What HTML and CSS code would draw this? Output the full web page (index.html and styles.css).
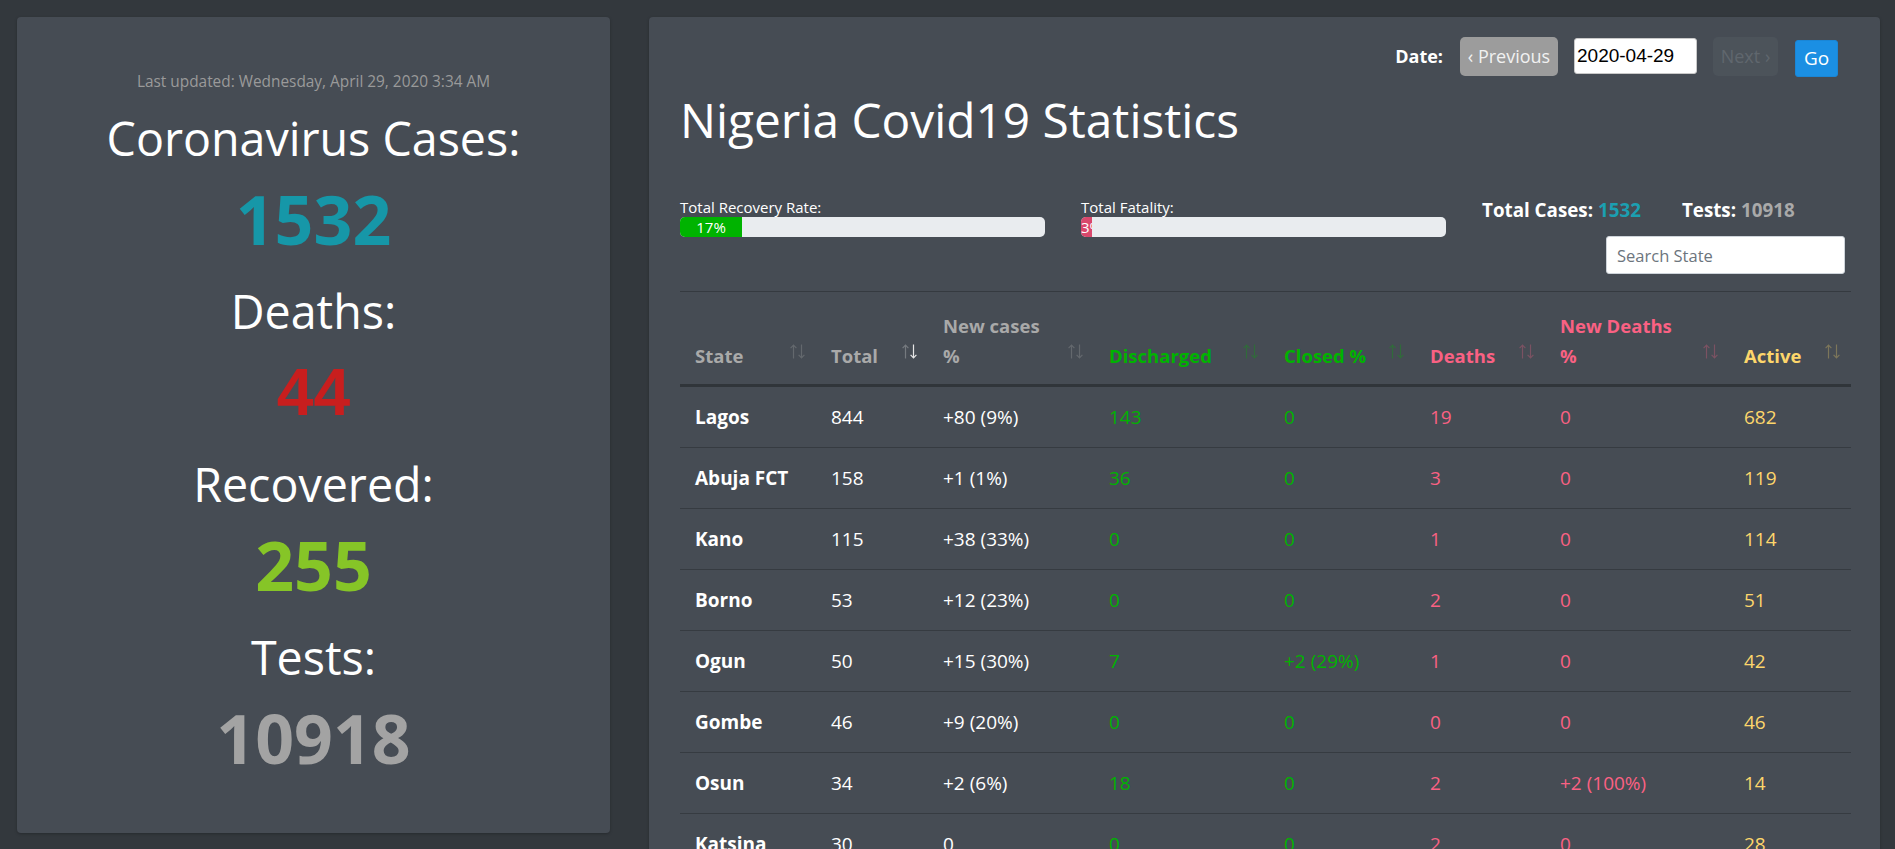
FILE: index.html
```html
<!DOCTYPE html>
<html lang="en">
<head>
<meta charset="utf-8">
<title>Nigeria Covid19 Statistics</title>
<link rel="stylesheet" href="styles.css">
</head>
<body>
<div class="page">
  <aside class="card summary">
    <p class="updated">Last updated: Wednesday, April 29, 2020 3:34 AM</p>
    <h2 class="stat-label first">Coronavirus Cases:</h2>
    <div class="stat-num num-cases">1532</div>
    <h2 class="stat-label">Deaths:</h2>
    <div class="stat-num num-deaths">44</div>
    <h2 class="stat-label">Recovered:</h2>
    <div class="stat-num num-recovered">255</div>
    <h2 class="stat-label">Tests:</h2>
    <div class="stat-num num-tests">10918</div>
  </aside>

  <main class="card main">
    <div class="controls">
      <span class="date-label">Date:</span>
      <button class="btn btn-prev">&lsaquo; Previous</button>
      <input class="date-input" type="text" value="2020-04-29">
      <button class="btn btn-next" disabled>Next &rsaquo;</button>
      <button class="btn btn-go">Go</button>
    </div>

    <h1 class="title">Nigeria Covid19 Statistics</h1>

    <div class="overview">
      <div class="ov-col">
        <div class="ov-label">Total Recovery Rate:</div>
        <div class="progress"><div class="bar bar-green" style="width:17%">17%</div></div>
      </div>
      <div class="ov-col">
        <div class="ov-label">Total Fatality:</div>
        <div class="progress"><div class="bar bar-red" style="width:3%">3%</div></div>
      </div>
      <div class="ov-col ov-totals">
        <div class="totals">
          <span class="total-item">Total Cases: <span class="c-teal">1532</span></span>
          <span class="total-item">Tests: <span class="c-gray">10918</span></span>
        </div>
        <input class="search" type="text" placeholder="Search State">
      </div>
    </div>

    <table class="stats">
      <colgroup>
        <col class="w-state"><col class="w-total"><col class="w-new"><col class="w-dis">
        <col class="w-closed"><col class="w-deaths"><col class="w-newd"><col class="w-active">
      </colgroup>
      <thead>
        <tr>
          <th class="h-gray">State<span class="sort"><svg viewBox="0 0 17 15" width="17" height="15"><path class="up" d="M4.5 14.5V1.2M1.6 4.2l2.9-3 2.9 3"/><path class="down" d="M12.5 0.5v13.3M9.6 10.8l2.9 3 2.9-3"/></svg></span></th>
          <th class="h-gray">Total<span class="sort sorted-desc"><svg viewBox="0 0 17 15" width="17" height="15"><path class="up" d="M4.5 14.5V1.2M1.6 4.2l2.9-3 2.9 3"/><path class="down" d="M12.5 0.5v13.3M9.6 10.8l2.9 3 2.9-3"/></svg></span></th>
          <th class="h-gray">New cases<br>%<span class="sort"><svg viewBox="0 0 17 15" width="17" height="15"><path class="up" d="M4.5 14.5V1.2M1.6 4.2l2.9-3 2.9 3"/><path class="down" d="M12.5 0.5v13.3M9.6 10.8l2.9 3 2.9-3"/></svg></span></th>
          <th class="h-green">Discharged<span class="sort"><svg viewBox="0 0 17 15" width="17" height="15"><path class="up" d="M4.5 14.5V1.2M1.6 4.2l2.9-3 2.9 3"/><path class="down" d="M12.5 0.5v13.3M9.6 10.8l2.9 3 2.9-3"/></svg></span></th>
          <th class="h-green">Closed %<span class="sort"><svg viewBox="0 0 17 15" width="17" height="15"><path class="up" d="M4.5 14.5V1.2M1.6 4.2l2.9-3 2.9 3"/><path class="down" d="M12.5 0.5v13.3M9.6 10.8l2.9 3 2.9-3"/></svg></span></th>
          <th class="h-pink">Deaths<span class="sort"><svg viewBox="0 0 17 15" width="17" height="15"><path class="up" d="M4.5 14.5V1.2M1.6 4.2l2.9-3 2.9 3"/><path class="down" d="M12.5 0.5v13.3M9.6 10.8l2.9 3 2.9-3"/></svg></span></th>
          <th class="h-pink">New Deaths<br>%<span class="sort"><svg viewBox="0 0 17 15" width="17" height="15"><path class="up" d="M4.5 14.5V1.2M1.6 4.2l2.9-3 2.9 3"/><path class="down" d="M12.5 0.5v13.3M9.6 10.8l2.9 3 2.9-3"/></svg></span></th>
          <th class="h-yellow">Active<span class="sort"><svg viewBox="0 0 17 15" width="17" height="15"><path class="up" d="M4.5 14.5V1.2M1.6 4.2l2.9-3 2.9 3"/><path class="down" d="M12.5 0.5v13.3M9.6 10.8l2.9 3 2.9-3"/></svg></span></th>
        </tr>
      </thead>
      <tbody>
        <tr><td class="state">Lagos</td><td>844</td><td>+80 (9%)</td><td class="c-green">143</td><td class="c-green">0</td><td class="c-pink">19</td><td class="c-pink">0</td><td class="c-yellow">682</td></tr>
        <tr><td class="state">Abuja FCT</td><td>158</td><td>+1 (1%)</td><td class="c-green">36</td><td class="c-green">0</td><td class="c-pink">3</td><td class="c-pink">0</td><td class="c-yellow">119</td></tr>
        <tr><td class="state">Kano</td><td>115</td><td>+38 (33%)</td><td class="c-green">0</td><td class="c-green">0</td><td class="c-pink">1</td><td class="c-pink">0</td><td class="c-yellow">114</td></tr>
        <tr><td class="state">Borno</td><td>53</td><td>+12 (23%)</td><td class="c-green">0</td><td class="c-green">0</td><td class="c-pink">2</td><td class="c-pink">0</td><td class="c-yellow">51</td></tr>
        <tr><td class="state">Ogun</td><td>50</td><td>+15 (30%)</td><td class="c-green">7</td><td class="c-green">+2 (29%)</td><td class="c-pink">1</td><td class="c-pink">0</td><td class="c-yellow">42</td></tr>
        <tr><td class="state">Gombe</td><td>46</td><td>+9 (20%)</td><td class="c-green">0</td><td class="c-green">0</td><td class="c-pink">0</td><td class="c-pink">0</td><td class="c-yellow">46</td></tr>
        <tr><td class="state">Osun</td><td>34</td><td>+2 (6%)</td><td class="c-green">18</td><td class="c-green">0</td><td class="c-pink">2</td><td class="c-pink">+2 (100%)</td><td class="c-yellow">14</td></tr>
        <tr><td class="state">Katsina</td><td>30</td><td>0</td><td class="c-green">0</td><td class="c-green">0</td><td class="c-pink">2</td><td class="c-pink">0</td><td class="c-yellow">28</td></tr>
      </tbody>
    </table>
  </main>
</div>
</body>
</html>
```

FILE: styles.css
```css
html, body {
  margin: 0;
  padding: 0;
  overflow: hidden;
}

body {
  background: #33383d;
  color: #ffffff;
  font-family: "Segoe UI", "Open Sans", "Noto Sans", sans-serif;
  font-size: 19px;
}

.page {
  display: grid;
  grid-template-columns: 593px 1231px;
  column-gap: 39px;
  align-items: start;
  padding: 17px 15px 0 17px;
}

.card {
  background: #464c54;
  border-radius: 4px;
  box-shadow: 0 1px 3px rgba(0, 0, 0, 0.25);
}

/* ---------- left summary ---------- */
.summary {
  display: flex;
  flex-direction: column;
  align-items: center;
  text-align: center;
  padding: 53px 0 55px;
}

.updated {
  margin: 0;
  font-size: 15.4px;
  line-height: 24px;
  color: #9a9a9a;
}

.stat-label {
  margin: 22px 0 0;
  font-size: 46.6px;
  font-weight: 400;
  line-height: 60px;
  color: #ffffff;
}

.stat-label.first {
  margin-top: 14px;
}

.stat-num {
  margin-top: 11px;
  font-size: 68px;
  font-weight: 700;
  line-height: 80px;
}

.num-cases { color: #1697a8; }
.num-deaths { color: #c81e1e; font-family: "Liberation Sans", "Open Sans", sans-serif; font-size: 66px; }
.num-recovered { color: #86c527; }
.num-tests { color: #a3a3a3; }

/* ---------- right main ---------- */
.main {
  padding: 19px 29px 40px 31px;
}

.controls {
  display: flex;
  justify-content: flex-end;
  align-items: center;
  gap: 16px;
  height: 40px;
  margin-right: 13px;
}

.date-label {
  font-size: 18px;
  font-weight: 700;
  margin-right: 1px;
}

.btn {
  font-family: inherit;
  font-size: 18px;
  height: 39px;
  border: 0;
  border-radius: 5px;
  padding: 0;
  text-align: center;
}

.btn-prev {
  width: 98px;
  background: #9c9c9c;
  color: #f1f1f1;
}

.btn-next {
  width: 65px;
  background: #4c535a;
  color: #60676e;
}

.btn-go {
  width: 43px;
  height: 37px;
  margin-top: 4px;
  margin-left: 1px;
  background: #1b8fe3;
  border: 1px solid #1a86d6;
  border-radius: 3px;
  color: #ffffff;
  font-size: 19px;
}

.date-input {
  box-sizing: border-box;
  width: 123px;
  height: 36px;
  border: 1px solid #c9c9c9;
  border-radius: 3px;
  padding: 0 2px;
  font-family: "Liberation Sans", "Open Sans", sans-serif;
  font-size: 19px;
  color: #000000;
  background: #ffffff;
}

.title {
  margin: 15px 0 0;
  font-size: 47.8px;
  font-weight: 400;
  line-height: 58px;
}

.overview {
  display: grid;
  grid-template-columns: 365px 365px 1fr;
  column-gap: 36px;
  margin-top: 48px;
  margin-bottom: 17px;
}

.ov-label {
  font-size: 15px;
  line-height: 20px;
}

.progress {
  display: flex;
  height: 20px;
  background: #e9ecef;
  border-radius: 5px;
  overflow: hidden;
}

.bar {
  display: flex;
  flex-direction: column;
  justify-content: center;
  text-align: center;
  white-space: nowrap;
  overflow: hidden;
  font-size: 15px;
  color: #ffffff;
}

.bar-green { background: #00b300; }
.bar-red { background: #d9486c; }

.ov-totals {
  display: flex;
  flex-direction: column;
  align-items: flex-end;
}

.totals {
  align-self: stretch;
  display: flex;
  gap: 41px;
  font-size: 18.8px;
  font-weight: 700;
  line-height: 24px;
  margin-top: 1px;
}

.c-teal { color: #1b9fb1; }
.c-gray { color: #a9a9a9; }

.search {
  box-sizing: border-box;
  width: 239px;
  height: 38px;
  margin-top: 14px;
  margin-right: 6px;
  padding: 0 10px;
  border: 1px solid #ced4da;
  border-radius: 3px;
  font-family: inherit;
  font-size: 16.5px;
  color: #495057;
  background: #ffffff;
}

.search::placeholder {
  color: #6c757d;
}

/* ---------- table ---------- */
.stats {
  width: 100%;
  table-layout: fixed;
  border-collapse: collapse;
  border-top: 1px solid #353a40;
}

.w-state { width: 136px; }
.w-total { width: 112px; }
.w-new { width: 166px; }
.w-dis { width: 175px; }
.w-closed { width: 146px; }
.w-deaths { width: 130px; }
.w-newd { width: 184px; }
.w-active { width: 122px; }

.stats th {
  position: relative;
  text-align: left;
  vertical-align: bottom;
  padding: 19px 30px 13px 15px;
  font-size: 18.5px;
  font-weight: 700;
  line-height: 30px;
  border-bottom: 3px solid #30353a;
}

.stats td {
  padding: 15px 15px;
  font-size: 19px;
  line-height: 30px;
  border-bottom: 1px solid #363b41;
  white-space: nowrap;
}

.stats td.state {
  font-weight: 700;
}

.h-gray { color: #a9a9a9; }
.h-green { color: #00b300; }
.h-pink { color: #fa6183; }
.h-yellow { color: #fdd66b; }

.c-green { color: #00b300; }
.c-pink { color: #fa6183; }
.c-yellow { color: #fdd66b; }

.sort {
  position: absolute;
  right: 10px;
  bottom: 25px;
  width: 17px;
  height: 15px;
  line-height: 0;
}

.sort svg {
  display: block;
  fill: none;
  stroke: currentColor;
  stroke-width: 1.2;
}

.sort .up,
.sort .down {
  opacity: 0.3;
}

.sorted-desc {
  color: #e6e6e6;
}

.sorted-desc .down {
  opacity: 1;
}
```
